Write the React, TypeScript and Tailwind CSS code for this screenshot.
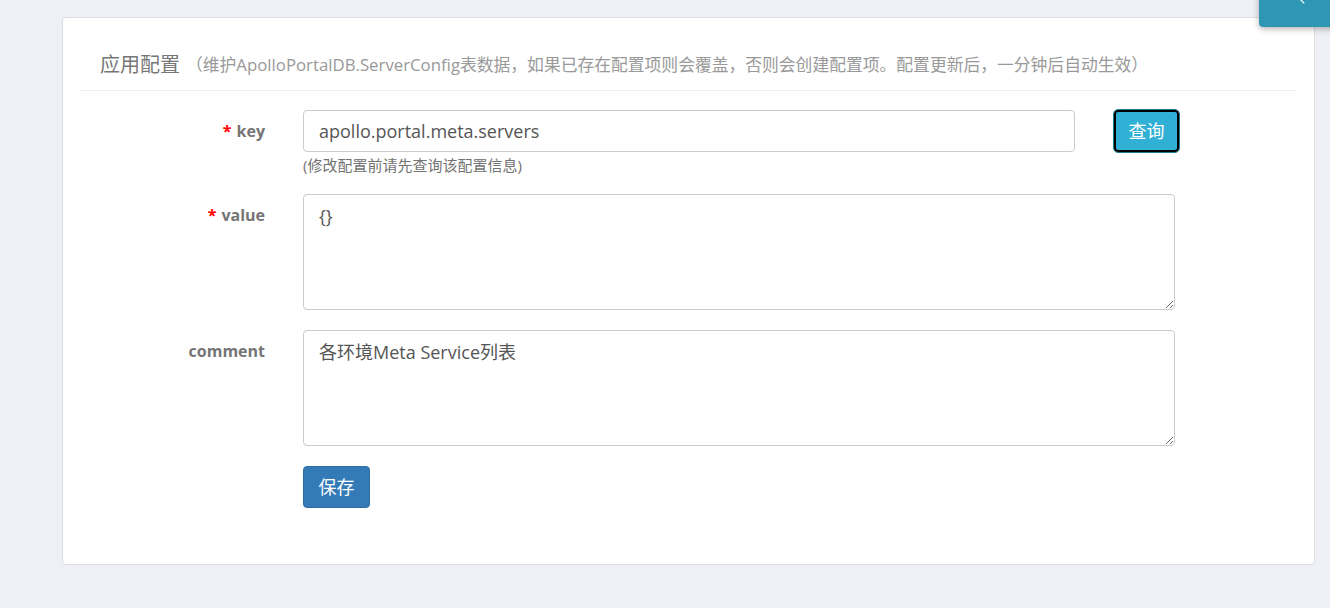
import React from "react";
import { ArrowLeft } from "lucide-react";

const font = {
  fontFamily: '"Open Sans", "Noto Sans CJK SC", sans-serif',
};

function Label({ text, required }: { text: string; required?: boolean }) {
  return (
    <div className="w-[184px] h-[42px] flex items-center justify-end shrink-0">
      <span className="text-[16px] font-bold text-[#757575] leading-none">
        {required && <span className="text-[#ff0000] mr-[5px]">*</span>}
        {text}
      </span>
    </div>
  );
}

export default function App() {
  return (
    <div
      className="relative w-[1330px] h-[608px] overflow-hidden bg-[#eff0f5] pt-[17px] pl-[62px]"
      style={font}
    >
      {/* 右上角悬浮按钮 */}
      <div className="absolute right-[-20px] top-[-10px] w-[91px] h-[37px] bg-[#2f97b4] rounded-[4px] shadow-[0_2px_6px_rgba(0,0,0,0.3)] text-white flex items-start pl-[38px]">
        <ArrowLeft size={14} strokeWidth={2} className="mt-[2px]" />
      </div>

      <div className="w-[1253px] h-[548px] bg-white border border-[#dcdee3] rounded-[4px] px-[18px]">
        {/* 标题 */}
        <div className="h-[73px] border-b border-[#eeeeee] flex items-end pb-[12px] pl-[19px]">
          <span className="text-[20px] text-[#777777] leading-[26px] whitespace-nowrap">应用配置</span>
          <span className="ml-[6px] text-[16.8px] text-[#999999] leading-[26px] whitespace-nowrap">
            （维护ApolloPortalDB.ServerConfig表数据，如果已存在配置项则会覆盖，否则会创建配置项。配置更新后，一分钟后自动生效）
          </span>
        </div>

        {/* 表单 */}
        <div className="pt-[19px] flex flex-col">
          <div className="flex">
            <Label text="key" required />
            <div className="ml-[38px] w-[772px]">
              <div className="h-[42px] border border-[#cccccc] rounded-[4px] px-[15px] flex items-center text-[18px] text-[#555555]">
                apollo.portal.meta.servers
              </div>
              <div className="mt-[3px] text-[15px] leading-[20px] text-[#737373]">
                (修改配置前请先查询该配置信息)
              </div>
            </div>
            <button className="ml-[39px] w-[65px] h-[42px] bg-[#31b0d5] border-2 border-black rounded-[4px] outline outline-1 outline-[#1f7a95] outline-offset-0 text-white text-[18px] leading-none">
              查询
            </button>
          </div>

          <div className="flex mt-[19px]">
            <Label text="value" required />
            <textarea
              readOnly
              defaultValue="{}"
              className="ml-[38px] w-[872px] h-[116px] border border-[#cccccc] rounded-[4px] px-[15px] py-[8px] text-[18px] text-[#555555] leading-[26px] outline-none resize-y"
              style={font}
            />
          </div>

          <div className="flex mt-[20px]">
            <Label text="comment" />
            <textarea
              readOnly
              defaultValue="各环境Meta Service列表"
              className="ml-[38px] w-[872px] h-[116px] border border-[#cccccc] rounded-[4px] px-[15px] py-[8px] text-[18px] text-[#555555] leading-[26px] outline-none resize-y"
              style={font}
            />
          </div>

          <div className="flex mt-[20px]">
            <div className="w-[184px] shrink-0" />
            <button className="ml-[38px] w-[67px] h-[42px] bg-[#337ab7] border border-[#2e6da4] rounded-[4px] text-white text-[18px] leading-none">
              保存
            </button>
          </div>
        </div>
      </div>
    </div>
  );
}
